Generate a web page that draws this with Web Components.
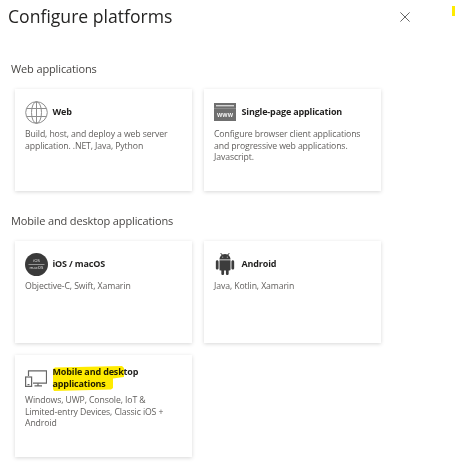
<!DOCTYPE html>
<html>
<head>
<meta charset="utf-8">
<title>Configure platforms</title>
<style>
  html, body { margin: 0; background: #fff; }
  body { font-family: "Open Sans", "Liberation Sans", sans-serif; }
  svg { display: block; }
</style>
</head>
<body>
<platform-panel heading="Configure platforms">
  <platform-section heading="Web applications">
    <platform-card heading="Web" text="Build, host, and deploy a web server application. .NET, Java, Python">
      <svg slot="icon" width="23" height="23" viewBox="0 0 23 23" fill="none" stroke="#8e8e8e" stroke-width="1">
        <circle cx="11.5" cy="11.5" r="10.8"/>
        <ellipse cx="11.5" cy="11.5" rx="5" ry="10.8"/>
        <path d="M1.6 7.5h19.8M1.6 15.5h19.8M11.5.7v21.6"/>
      </svg>
    </platform-card>
    <platform-card heading="Single-page application" text="Configure browser client applications and progressive web applications. Javascript.">
      <svg slot="icon" width="22" height="18" viewBox="0 0 22 18">
        <rect width="22" height="18" fill="#6f6f6f"/>
        <rect x="2" y="2" width="18" height="1.4" fill="#d4d4d4"/>
        <rect y="5" width="22" height="1" fill="#8b8b8b"/>
        <text x="11" y="13.6" text-anchor="middle" font-family="Open Sans, sans-serif" font-size="6.5" font-weight="600" fill="#fff">www</text>
      </svg>
    </platform-card>
  </platform-section>
  <platform-section heading="Mobile and desktop applications">
    <platform-card heading="iOS / macOS" text="Objective-C, Swift, Xamarin">
      <svg slot="icon" width="23" height="23" viewBox="0 0 23 23">
        <circle cx="11.5" cy="11.5" r="11.5" fill="#3a3a3a"/>
        <text x="11.5" y="9.4" text-anchor="middle" font-family="Open Sans, sans-serif" font-size="4.2" fill="#e4e4e4">iOS</text>
        <rect x="3.5" y="11" width="16" height=".6" fill="#cfcfcf"/>
        <text x="11.5" y="16.4" text-anchor="middle" font-family="Open Sans, sans-serif" font-size="4.2" fill="#e4e4e4">macOS</text>
      </svg>
    </platform-card>
    <platform-card heading="Android" text="Java, Kotlin, Xamarin">
      <svg slot="icon" width="22" height="22" viewBox="0 0 24 24" fill="#3c3c3c">
        <path d="M6 18c0 .55.45 1 1 1h1v3.5c0 .83.67 1.5 1.5 1.5s1.5-.67 1.5-1.5V19h2v3.5c0 .83.67 1.5 1.5 1.5s1.5-.67 1.5-1.5V19h1c.55 0 1-.45 1-1V8H6v10zM3.5 8C2.67 8 2 8.67 2 9.5v7c0 .83.67 1.5 1.5 1.5S5 17.33 5 16.5v-7C5 8.67 4.33 8 3.5 8zm17 0c-.83 0-1.5.67-1.5 1.5v7c0 .83.67 1.5 1.5 1.5s1.5-.67 1.5-1.5v-7c0-.83-.67-1.5-1.5-1.5zm-4.97-5.84l1.3-1.3c.2-.2.2-.51 0-.71-.2-.2-.51-.2-.71 0l-1.48 1.48C13.85 1.23 12.95 1 12 1c-.96 0-1.86.23-2.66.63L7.85.15c-.2-.2-.51-.2-.71 0-.2.2-.2.51 0 .71l1.31 1.31C6.97 3.26 6 5.01 6 7h12c0-1.99-.97-3.75-2.47-4.84zM10 5H9V4h1v1zm5 0h-1V4h1v1z"/>
      </svg>
    </platform-card>
    <platform-card heading="Mobile and desktop applications" text="Windows, UWP, Console, IoT &amp; Limited-entry Devices, Classic iOS + Android" marked>
      <svg slot="icon" width="22" height="17" viewBox="0 0 22 17" fill="none" stroke="#666" stroke-width="1.2">
        <path d="M3.5 6V.8h18v12.4H8"/>
        <path d="M13 13.2v2.3M9.5 15.8h7.5"/>
        <rect x=".6" y="7" width="6" height="9.4" fill="#fff"/>
        <path d="M2.5 14.6h2"/>
      </svg>
    </platform-card>
  </platform-section>
</platform-panel>

<script>
  const panelTemplate = document.createElement("template");
  panelTemplate.innerHTML = `
  <style>
    :host {
      display: block;
      position: relative;
      height: 472px;
      box-sizing: border-box;
      padding: 3px 0 0 8px;
      overflow: hidden;
    }
    header {
      display: flex;
      justify-content: space-between;
      align-items: flex-start;
      width: 402px;
      height: 57px;
    }
    h1 {
      margin: 0;
      font-size: 17.6px;
      line-height: 26px;
      font-weight: 400;
      color: #252423;
    }
    .close {
      margin-top: 9px;
      width: 10px;
      height: 10px;
    }
    .mark {
      position: absolute;
      left: 452px;
      top: 6px;
      width: 3px;
      height: 10px;
      background: #ffeb00;
    }
  </style>
  <header>
    <h1></h1>
    <svg class="close" viewBox="0 0 10 10" fill="none" stroke="#555" stroke-width=".9">
      <path d="M.4.4l9.2 9.2M9.6.4L.4 9.6"/>
    </svg>
  </header>
  <slot></slot>
  <div class="mark"></div>
`;

  class PlatformPanel extends HTMLElement {
    constructor() {
      super();
      this.attachShadow({ mode: "open" });
      this.shadowRoot.appendChild(panelTemplate.content.cloneNode(true));
    }

    connectedCallback() {
      this.shadowRoot.querySelector("h1").textContent = this.getAttribute("heading");
    }
  }

  const sectionTemplate = document.createElement("template");
  sectionTemplate.innerHTML = `
  <style>
    :host {
      display: block;
      padding-left: 3px;
      margin-bottom: 21px;
    }
    h2 {
      margin: 0 0 11px;
      font-size: 11px;
      letter-spacing: -.13px;
      line-height: 18px;
      font-weight: 400;
      color: #484644;
    }
    .grid {
      display: grid;
      grid-template-columns: 177px 177px;
      gap: 12px;
      margin-left: 4px;
    }
  </style>
  <h2></h2>
  <div class="grid"><slot></slot></div>
`;

  class PlatformSection extends HTMLElement {
    constructor() {
      super();
      this.attachShadow({ mode: "open" });
      this.shadowRoot.appendChild(sectionTemplate.content.cloneNode(true));
    }

    connectedCallback() {
      this.shadowRoot.querySelector("h2").textContent = this.getAttribute("heading");
    }
  }

  const cardTemplate = document.createElement("template");
  cardTemplate.innerHTML = `
  <style>
    :host {
      display: block;
      box-sizing: border-box;
      height: 102px;
      padding: 11px 10px 0;
      background: #fff;
      box-shadow: 0 1px 4px rgba(0, 0, 0, .16);
    }
    .top {
      display: flex;
      align-items: center;
      min-height: 24px;
      margin-bottom: 5px;
    }
    .icon {
      flex: none;
      width: 27.5px;
    }
    h3 {
      position: relative;
      margin: 0;
      font-size: 9px;
      letter-spacing: -.15px;
      line-height: 12px;
      font-weight: 700;
      color: #201f1e;
    }
    h3 svg {
      position: absolute;
      left: 0;
      top: 0;
      mix-blend-mode: multiply;
    }
    p {
      margin: 0;
      max-width: 152px;
      font-size: 8.7px;
      letter-spacing: -.11px;
      line-height: 11.7px;
      color: #605e5c;
    }
  </style>
  <div class="top">
    <div class="icon"><slot name="icon"></slot></div>
    <h3></h3>
  </div>
  <p></p>
`;

  class PlatformCard extends HTMLElement {
    constructor() {
      super();
      this.attachShadow({ mode: "open" });
      this.shadowRoot.appendChild(cardTemplate.content.cloneNode(true));
    }

    connectedCallback() {
      const title = this.shadowRoot.querySelector("h3");
      title.textContent = this.getAttribute("heading");
      this.shadowRoot.querySelector("p").textContent = this.getAttribute("text");
      if (this.hasAttribute("marked")) {
        title.insertAdjacentHTML("beforeend", `
          <svg width="72" height="25" viewBox="0 0 72 25">
            <path fill="#ffeb00" d="M2 1.5L69 0l2 2v9l-11 1.5V22l-2 1.5L1 25l-1-2V3z"/>
          </svg>`);
      }
    }
  }

  window.customElements.define("platform-panel", PlatformPanel);
  window.customElements.define("platform-section", PlatformSection);
  window.customElements.define("platform-card", PlatformCard);
</script>
</body>
</html>
